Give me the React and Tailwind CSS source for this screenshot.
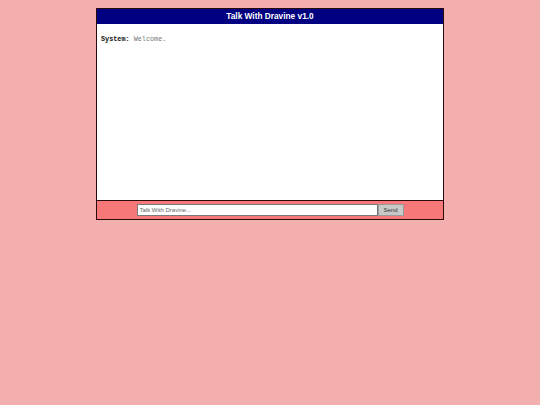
import React, { useState } from 'react';

export default function App() {
  const [text, setText] = useState('');
  const [messages, setMessages] = useState([{ from: 'System', body: 'Welcome.' }]);

  const send = () => {
    if (!text.trim()) return;
    setMessages(m => [...m, { from: 'You', body: text }]);
    setText('');
  };

  return (
    <div className="min-h-screen bg-[#f3aeae] pt-2 font-['Liberation_Sans',Arial,sans-serif]">
      <div className="mx-auto w-[348px] border border-[#2a0a0a]">
        {/* header */}
        <div className="h-[15px] bg-[#000080] text-white font-bold text-[8.3px] leading-[15px] text-center">
          Talk With Dravine v1.0
        </div>

        {/* chat log */}
        <div className="h-[176px] bg-white px-[4px] pt-[11px] overflow-y-auto font-['Liberation_Mono','Courier_New',monospace] text-[6.8px] leading-[9px]">
          {messages.map((m, i) => (
            <div key={i}>
              <span className="font-bold text-[#111]">{m.from}:</span>{' '}
              <span className="text-[#777]">{m.body}</span>
            </div>
          ))}
        </div>

        {/* input bar */}
        <div className="h-[19px] border-t border-[#2a0a0a] bg-[#f77878] flex items-start justify-center pt-[3px]">
          <input
            value={text}
            onChange={e => setText(e.target.value)}
            onKeyDown={e => e.key === 'Enter' && send()}
            placeholder="Talk With Dravine..."
            className="w-[241px] h-[12px] bg-white border border-[#7a7a7a] px-[2px] text-[6px] outline-none placeholder:text-[#666]"
          />
          <button
            onClick={send}
            className="w-[26px] h-[12px] bg-[#c9c9c9] border border-[#9a9a9a] text-[6px] text-[#333] leading-none"
          >
            Send
          </button>
        </div>
      </div>
    </div>
  );
}
